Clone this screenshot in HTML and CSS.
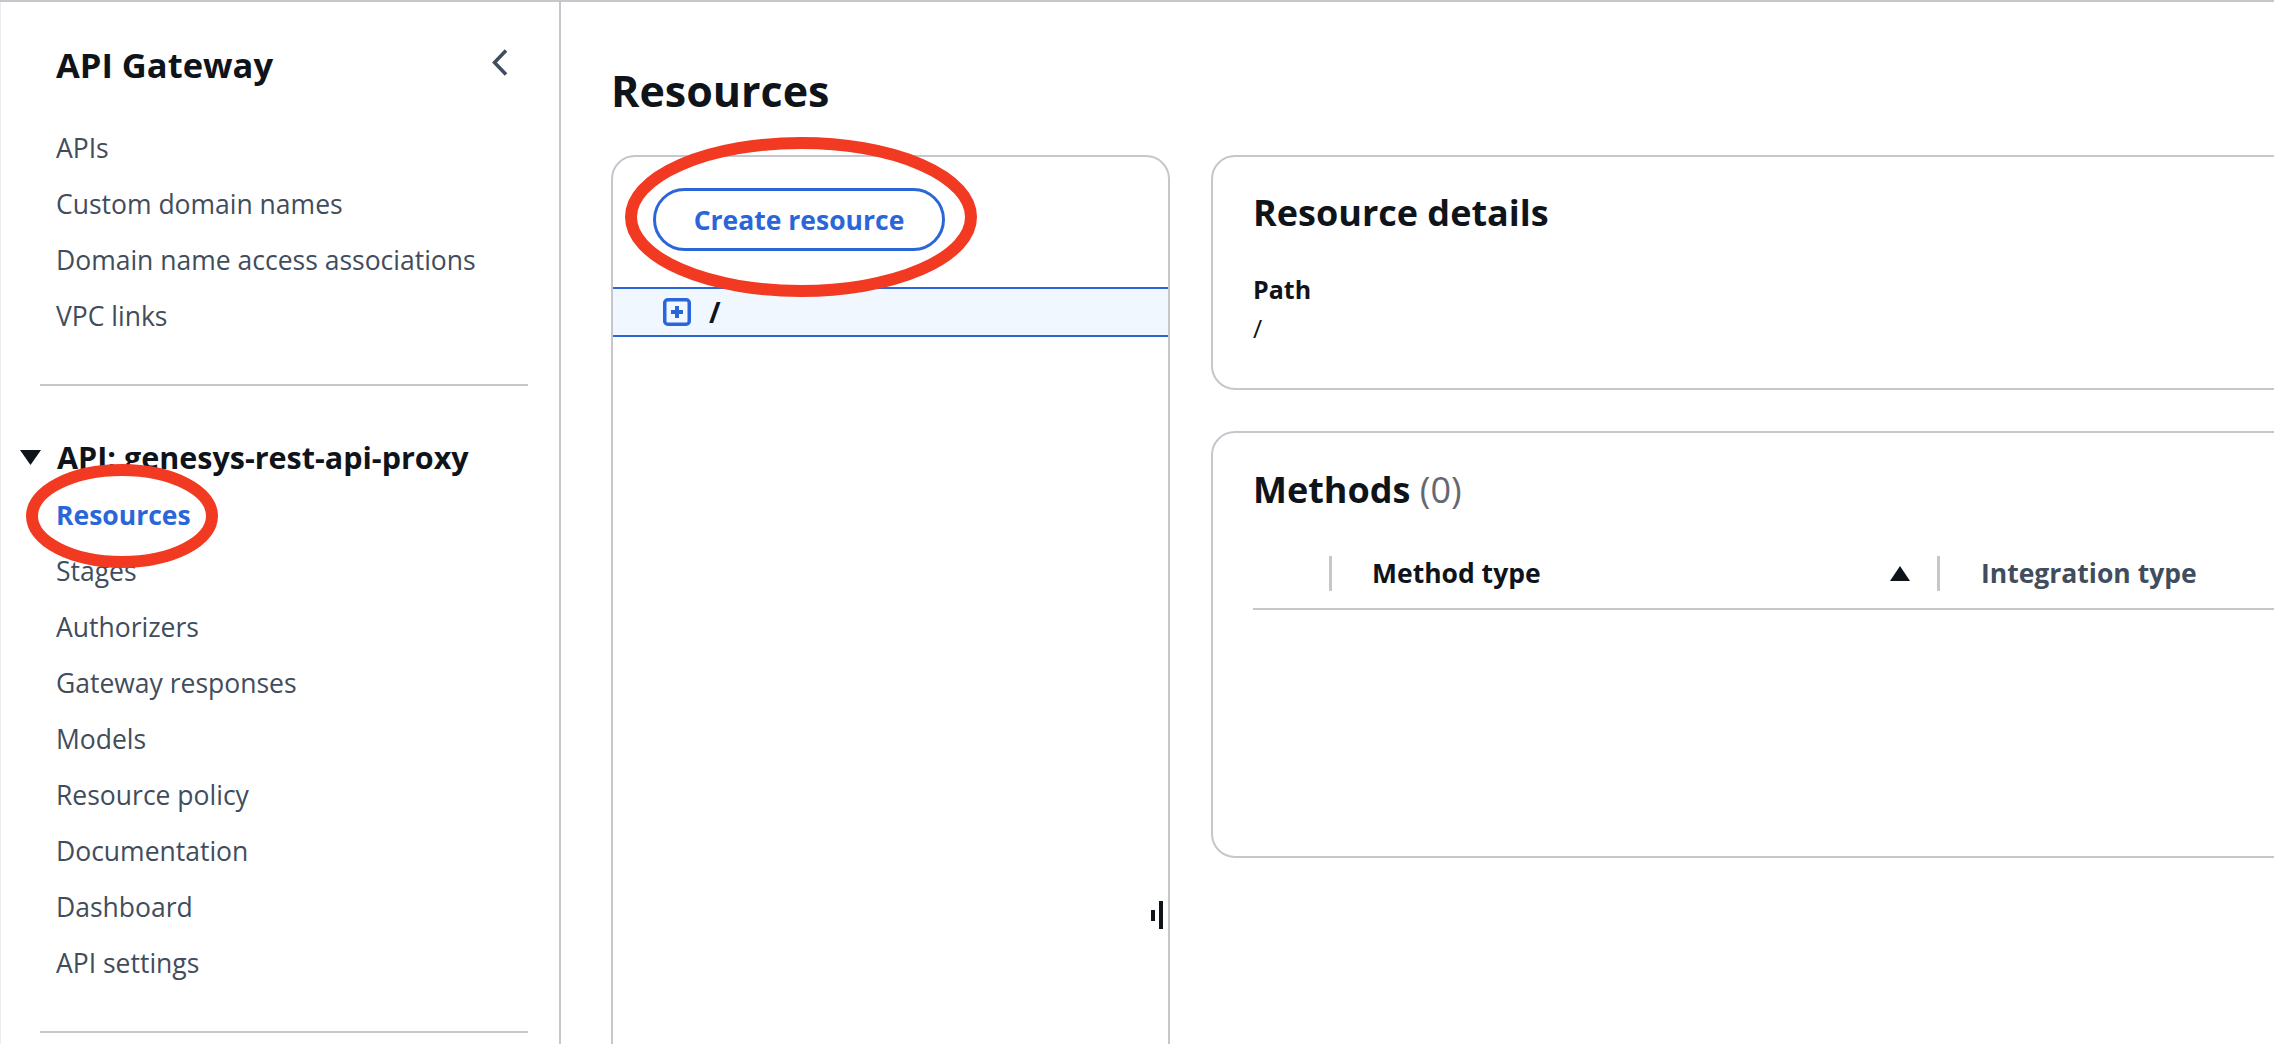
FILE: index.html
```html
<!DOCTYPE html>
<html lang="en">
<head>
<meta charset="utf-8">
<title>API Gateway - Resources</title>
<link rel="stylesheet" href="styles.css">
</head>
<body>
<div class="app">
  <aside class="nav">
    <div class="nav-header">
      <span class="nav-title">API Gateway</span>
      <svg class="chevron" width="16" height="27" viewBox="0 0 16 27"><path d="M14 1.5 L2.5 13.5 L14 25.5" fill="none" stroke="#414d5c" stroke-width="3.5" stroke-linejoin="miter"/></svg>
    </div>
    <ul class="nav-list top-list">
      <li>APIs</li>
      <li>Custom domain names</li>
      <li>Domain name access associations</li>
      <li>VPC links</li>
    </ul>
    <div class="nav-divider"></div>
    <div class="section-title">
      <svg width="21" height="15" viewBox="0 0 21 15"><polygon points="0,0 21,0 10.5,15" fill="#0f141a"/></svg>
      <span>API: genesys-rest-api-proxy</span>
    </div>
    <ul class="nav-list sub-list">
      <li class="active">Resources</li>
      <li>Stages</li>
      <li>Authorizers</li>
      <li>Gateway responses</li>
      <li>Models</li>
      <li>Resource policy</li>
      <li>Documentation</li>
      <li>Dashboard</li>
      <li>API settings</li>
    </ul>
    <div class="nav-divider"></div>
  </aside>

  <main class="main">
    <h1 class="page-title">Resources</h1>
    <div class="layout">
      <section class="tree-panel">
        <button class="btn">Create resource</button>
        <div class="tree-row">
          <svg class="expand" width="28" height="28" viewBox="0 0 28 28"><rect x="1.75" y="1.75" width="24.5" height="24.5" rx="3" fill="none" stroke="#2b66d9" stroke-width="3.5"/><path d="M14 8 V20 M8 14 H20" stroke="#2b66d9" stroke-width="4"/></svg>
          <span class="slash">/</span>
        </div>
        <div class="resize"><span class="dot"></span><span class="bar"></span></div>
      </section>

      <div class="details">
        <section class="card card-details">
          <h2 class="card-title">Resource details</h2>
          <div class="label">Path</div>
          <div class="value">/</div>
        </section>
        <section class="card card-methods">
          <h2 class="card-title">Methods <span class="count">(0)</span></h2>
          <div class="table-head">
            <div class="sel-col"></div>
            <div class="sep"></div>
            <div class="th th-method">
              <span>Method type</span>
              <svg width="20" height="15" viewBox="0 0 20 15"><polygon points="10,0 20,15 0,15" fill="#0f141a"/></svg>
            </div>
            <div class="sep"></div>
            <div class="th th-integration">Integration type</div>
          </div>
        </section>
      </div>
    </div>
  </main>

  <svg class="annotations" width="2274" height="1044" viewBox="0 0 2274 1044">
    <ellipse cx="801" cy="217" rx="170" ry="74" fill="none" stroke="#f23a22" stroke-width="12"/>
    <ellipse cx="122" cy="516" rx="90" ry="46" fill="none" stroke="#f23a22" stroke-width="12"/>
  </svg>
</div>
</body>
</html>
```
FILE: styles.css
```css
* { box-sizing: border-box; }
html, body { margin: 0; padding: 0; }
body {
  font-family: "Open Sans", "Noto Sans", sans-serif;
  color: #0f141a;
  background: #ffffff;
  overflow: hidden;
  width: 2274px;
  height: 1044px;
}
.app {
  display: flex;
  height: 1044px;
  border-top: 2px solid #c6c6cd;
  position: relative;
  overflow: hidden;
}

/* Side navigation */
.nav {
  flex: 0 0 561px;
  border-left: 1px solid #ececf0;
  border-right: 2px solid #c6c6cd;
  padding-top: 35px;
}
.nav-header {
  display: flex;
  align-items: center;
  justify-content: space-between;
  height: 56px;
  padding: 0 51px 0 55px;
}
.nav-title {
  font-size: 34.5px;
  font-weight: 700;
  line-height: 56px;
  color: #0f141a;
}
.chevron { margin-bottom: 6px; }
.nav-list {
  list-style: none;
  margin: 0;
  padding: 0 0 0 55px;
}
.nav-list li {
  font-size: 26.5px;
  line-height: 56px;
  color: #414d5c;
  white-space: nowrap;
}
.top-list { margin-top: 27px; }
.nav-list li.active {
  color: #2b66d9;
  font-weight: 700;
}
.nav-divider {
  height: 2px;
  background: #c6c6cd;
  margin: 40px 31px 0 39px;
}
.section-title {
  margin-top: 43px;
  display: flex;
  align-items: center;
  gap: 16px;
  padding-left: 19px;
  font-size: 30.5px;
  font-weight: 700;
  line-height: 56px;
  white-space: nowrap;
}
.sub-list { margin-top: 2px; }

/* Main */
.main {
  flex: 1;
  padding: 61px 0 0 50px;
  min-width: 0;
}
.page-title {
  margin: 0;
  font-size: 43px;
  font-weight: 700;
  line-height: 56px;
}
.layout {
  display: flex;
  align-items: flex-start;
  gap: 41px;
  margin-top: 36px;
}
.tree-panel {
  flex: 0 0 559px;
  height: 1000px;
  border: 2px solid #c6c6cd;
  border-radius: 24px;
  padding-top: 31px;
  position: relative;
}
.btn {
  display: flex;
  align-items: center;
  justify-content: center;
  margin-left: 40px;
  width: 292px;
  height: 63px;
  border: 3px solid #2b66d9;
  border-radius: 32px;
  background: #ffffff;
  color: #2b66d9;
  font-family: inherit;
  font-size: 26.5px;
  font-weight: 700;
  padding: 0;
}
.tree-row {
  margin-top: 36px;
  height: 50px;
  border-top: 2px solid #2b66d9;
  border-bottom: 2px solid #2b66d9;
  background: #f0f7ff;
  display: flex;
  align-items: center;
  gap: 18px;
  padding-left: 50px;
}
.slash {
  font-size: 28px;
  font-weight: 700;
  line-height: 1;
}
.resize {
  position: absolute;
  right: 5px;
  top: 744px;
  display: flex;
  align-items: center;
  gap: 4px;
}
.resize .dot {
  width: 4px;
  height: 11px;
  background: #0f141a;
}
.resize .bar {
  width: 4px;
  height: 28px;
  background: #0f141a;
}

.details {
  flex: 0 0 1200px;
  display: flex;
  flex-direction: column;
  gap: 41px;
}
.card {
  border: 2px solid #c6c6cd;
  border-radius: 24px;
  padding: 32px 40px 40px;
}
.card-title {
  margin: 0;
  font-size: 36px;
  font-weight: 700;
  line-height: 48px;
}
.count {
  font-weight: 400;
  color: #656871;
}
.label {
  margin-top: 33px;
  font-size: 25px;
  font-weight: 700;
  line-height: 39px;
}
.value {
  font-size: 25px;
  line-height: 39px;
}
.card-methods {
  height: 427px;
  padding-top: 33px;
}
.table-head {
  margin-top: 24px;
  height: 72px;
  border-bottom: 2px solid #c6c6cd;
  display: flex;
  align-items: center;
}
.sel-col { flex: 0 0 76px; }
.sep {
  flex: 0 0 3px;
  height: 35px;
  background: #c6c6cd;
}
.th {
  font-size: 26.5px;
  font-weight: 700;
  line-height: 36px;
  white-space: nowrap;
}
.th-method {
  flex: 0 0 605px;
  display: flex;
  align-items: center;
  justify-content: space-between;
  padding: 0 27px 0 40px;
}
.th-integration {
  padding-left: 41px;
  color: #414d5c;
}

.annotations {
  position: absolute;
  top: -2px;
  left: 0;
  pointer-events: none;
}
```
